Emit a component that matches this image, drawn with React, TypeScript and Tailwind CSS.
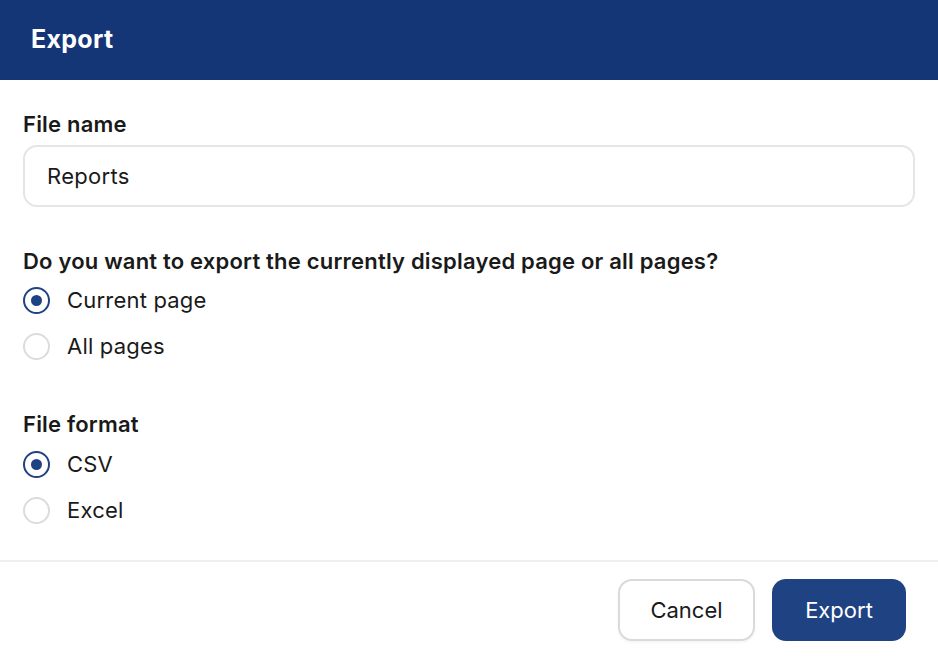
import { useState } from 'react';

const font = { fontFamily: 'Inter, "Liberation Sans", sans-serif' };

function Radio({ checked, label, onClick }: { checked: boolean; label: string; onClick: () => void }) {
  return (
    <button type="button" onClick={onClick} className="flex h-[46px] items-center gap-[17px] text-left">
      <span
        className={`flex h-[27px] w-[27px] items-center justify-center rounded-full border-2 ${
          checked ? 'border-[#1f4283]' : 'border-[#dcdcdc]'
        }`}
      >
        {checked && <span className="h-[11px] w-[11px] rounded-full bg-[#1f4283]" />}
      </span>
      <span className="text-[22px] tracking-[0.2px] text-[#1a1a1a]">{label}</span>
    </button>
  );
}

export default function App() {
  const [scope, setScope] = useState('current');
  const [format, setFormat] = useState('csv');
  const [name, setName] = useState('Reports');

  return (
    <div className="flex h-[658px] w-[938px] flex-col bg-white text-[#1a1a1a]" style={font}>
      <div className="flex h-[80px] shrink-0 items-center bg-[#153676] px-[31px]">
        <h1 className="text-[25px] font-bold tracking-[0.3px] text-white">Export</h1>
      </div>

      <div className="flex flex-col px-[23px] pt-[30px]">
        <label className="text-[22px] font-semibold leading-[28px] tracking-[0.2px]">File name</label>
        <input
          value={name}
          onChange={(e) => setName(e.target.value)}
          className="mt-[7px] h-[62px] w-full rounded-[14px] border-2 border-[#e5e5e5] px-[22px] text-[22px] tracking-[0.3px] outline-none"
        />

        <p className="mt-[40px] text-[22px] font-semibold leading-[28px] tracking-[0.2px]">
          Do you want to export the currently displayed page or all pages?
        </p>
        <div className="mt-[2px] flex flex-col">
          <Radio checked={scope === 'current'} label="Current page" onClick={() => setScope('current')} />
          <Radio checked={scope === 'all'} label="All pages" onClick={() => setScope('all')} />
        </div>

        <p className="mt-[41px] text-[22px] font-semibold leading-[28px] tracking-[0.2px]">File format</p>
        <div className="mt-[3px] flex flex-col">
          <Radio checked={format === 'csv'} label="CSV" onClick={() => setFormat('csv')} />
          <Radio checked={format === 'excel'} label="Excel" onClick={() => setFormat('excel')} />
        </div>
      </div>

      <div className="mt-[27px] border-t-2 border-[#f0f0f0]" />

      <div className="flex justify-end gap-[17px] px-[32px] pt-[17px]">
        <button className="h-[62px] w-[137px] rounded-[14px] border-2 border-[#dadada] bg-white text-[22px] shadow-[0_2px_3px_rgba(0,0,0,0.04)]">
          Cancel
        </button>
        <button className="h-[62px] w-[134px] rounded-[14px] bg-[#1f4283] text-[22px] text-white">
          Export
        </button>
      </div>
    </div>
  );
}
